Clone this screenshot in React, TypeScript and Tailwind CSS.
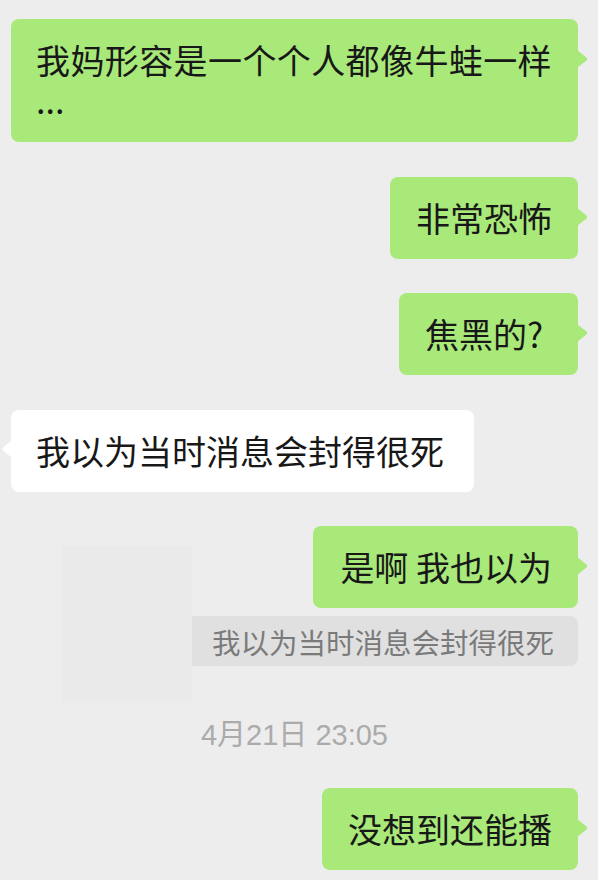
import React from "react";

const font = { fontFamily: '"Noto Sans CJK SC", "Noto Sans", sans-serif' };

function RightTail({ color }: { color: string }) {
  return (
    <svg className="absolute right-[-10px] top-[31px]" width="11" height="18" viewBox="0 0 11 18">
      <path d="M0 0 L9.5 7.6 Q11 9 9.5 10.4 L0 18 Z" fill={color} />
    </svg>
  );
}

function LeftTail({ color }: { color: string }) {
  return (
    <svg className="absolute left-[-9px] top-[30px]" width="10" height="18" viewBox="0 0 10 18">
      <path d="M10 0 L1 7.6 Q-0.4 9 1 10.4 L10 18 Z" fill={color} />
    </svg>
  );
}

function Green({ children, className = "" }: { children: React.ReactNode; className?: string }) {
  return (
    <div className={"relative rounded-[8px] bg-[#a9e97a] py-[21px] text-[34px] leading-[40px] text-[#181818] " + className}>
      <RightTail color="#a9e97a" />
      {children}
    </div>
  );
}

export default function App() {
  return (
    <div className="min-h-[880px] w-[598px] bg-[#ededed] pl-[11px] pr-[20px] pt-[19px]" style={font}>
      <div className="flex flex-col">
        <Green className="w-[567px] self-end pb-[22px] pl-[25px] pr-[20px]">
          <div className="whitespace-nowrap tracking-[0.4px]">我妈形容是一个个人都像牛蛙一样</div>
          <div>...</div>
        </Green>

        <Green className="mt-[35px] self-end px-[26px]">非常恐怖</Green>
        <Green className="mt-[34px] w-[179px] self-end pl-[26px]">焦黑的?</Green>

        <div className="relative mt-[35px] self-start rounded-[8px] bg-white py-[21px] pl-[25px] pr-[30px] text-[34px] leading-[40px] text-[#181818]">
          <LeftTail color="#ffffff" />
          我以为当时消息会封得很死
        </div>

        <div className="mt-[34px] flex">
          <div className="ml-[51px] mt-[20px] h-[155px] w-[130px] bg-[#eaeaea]" />
          <div className="flex flex-1 flex-col items-end">
            <Green className="pl-[27px] pr-[26px]">是啊 我也以为</Green>
            <div className="mt-[8px] w-full rounded-r-[8px] bg-[#e0e0e0] pl-[20px] pt-[6px] pb-[4px] text-[28.5px] leading-[40px] text-[#7a7a7a]">
              我以为当时消息会封得很死
            </div>
          </div>
        </div>

        <div
          className="mt-[14px] text-center text-[29px] leading-[40px] text-[#ababab]"
          style={{ fontFamily: '"Liberation Sans", "Noto Sans CJK SC", sans-serif' }}
        >
          4月21日 23:05
        </div>

        <Green className="mt-[33px] self-end px-[26px]">没想到还能播</Green>
      </div>
    </div>
  );
}
